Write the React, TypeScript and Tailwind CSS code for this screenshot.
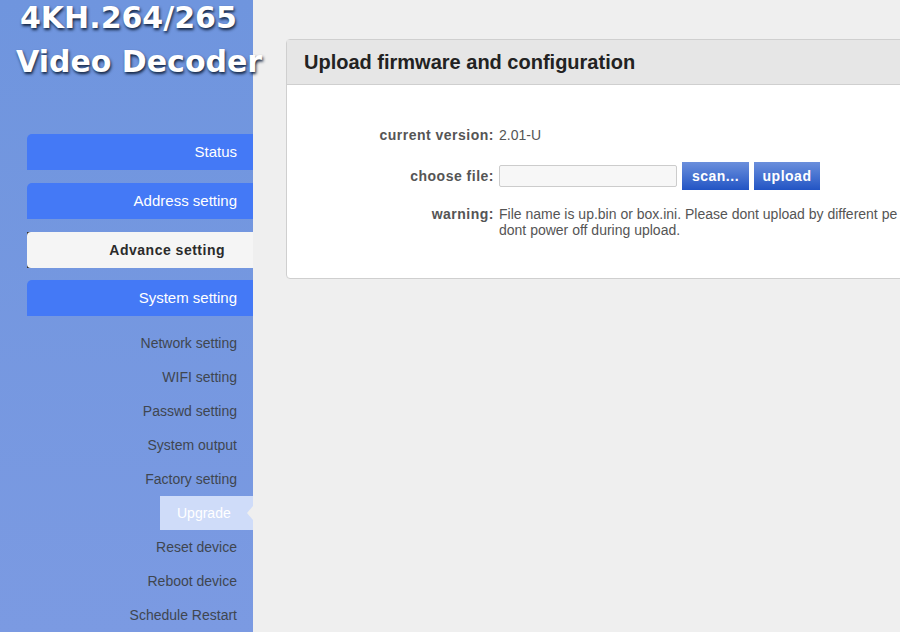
const subItems = [
  "Network setting",
  "WIFI setting",
  "Passwd setting",
  "System output",
  "Factory setting",
  "Upgrade",
  "Reset device",
  "Reboot device",
  "Schedule Restart",
];

function MainItem({ label }: { label: string }) {
  return (
    <a className="flex h-9 items-center justify-end rounded-tl-[5px] bg-[#4479f6] pr-4 text-[15px] text-white">
      {label}
    </a>
  );
}

function FormRow({ label, children }: { label: string; children: React.ReactNode }) {
  return (
    <div className="flex items-center gap-[5px]">
      <div className="w-[207px] shrink-0 text-right text-[14px] font-bold tracking-[0.5px] text-[#555]">
        {label}
      </div>
      {children}
    </div>
  );
}

function BlueButton({ label }: { label: string }) {
  return (
    <button className="h-7 bg-gradient-to-b from-[#6b8fdc] to-[#2254c4] text-[14px] font-bold tracking-[0.5px] text-white">
      {label}
    </button>
  );
}

export default function App() {
  return (
    <div className="flex h-[632px] w-[900px] overflow-hidden bg-[#efefef] font-['Liberation_Sans',Arial,sans-serif]">
      <aside className="flex w-[253px] shrink-0 flex-col bg-gradient-to-b from-[#6f95de] to-[#7b9ae2] pt-px">
        <div className="h-[139px] pl-4 font-['DejaVu_Sans',sans-serif] text-[30px] leading-[44px] font-bold whitespace-nowrap text-white [text-shadow:1px_2px_3px_#12233f]">
          <div className="-mt-[5px] pl-[4px]">4KH.264/265</div>
          <div>Video Decoder</div>
        </div>
        <nav className="pl-[27px]">
          <MainItem label="Status" />
          <div className="mt-[13px]">
            <MainItem label="Address setting" />
          </div>
          <div className="mt-[13px] bg-[#333]">
            <a className="flex h-9 items-center justify-end rounded-l-[4px] bg-[#f5f5f5] pr-7 text-[14px] font-bold tracking-[0.5px] text-[#2b2b2b]">
              Advance setting
            </a>
          </div>
          <div className="mt-3">
            <MainItem label="System setting" />
          </div>
        </nav>
        <ul className="mt-[10px] flex flex-col items-end">
          {subItems.map((item) =>
            item === "Upgrade" ? (
              <li
                key={item}
                className="relative flex h-[34px] w-[93px] items-center bg-[#cfdcf9] pl-[17px] text-[14px] text-white"
              >
                {item}
                <span className="absolute top-[10px] right-0 h-0 w-0 border-y-[7px] border-r-[6px] border-y-transparent border-r-[#efefef]" />
              </li>
            ) : (
              <li
                key={item}
                className="flex h-[34px] items-center pr-4 text-[14px] text-[#3f4650]"
              >
                {item}
              </li>
            ),
          )}
        </ul>
      </aside>
      <main className="min-w-0 flex-1 overflow-hidden pt-[39px] pl-[33px]">
        <section className="h-[240px] w-[760px] rounded-t-[4px] rounded-b-[4px] border border-[#cfcfcf] bg-white">
          <h1 className="flex h-[45px] items-center border-b border-[#cfcfcf] bg-[#e6e6e6] pl-[17px] text-[20px] font-bold text-[#222]">
            Upload firmware and configuration
          </h1>
          <div className="flex flex-col pt-10 text-[14px] text-[#555]">
            <FormRow label="current version:">
              <span>2.01-U</span>
            </FormRow>
            <div className="mt-[16px]">
              <FormRow label="choose file:">
                <div className="h-[22px] w-[178px] rounded-[2px] border border-[#ccc] bg-[#f7f7f7]" />
                <div className="flex gap-[5px]">
                  <div className="flex w-[67px] flex-col">
                    <BlueButton label="scan..." />
                  </div>
                  <div className="flex w-[66px] flex-col">
                    <BlueButton label="upload" />
                  </div>
                </div>
              </FormRow>
            </div>
            <div className="mt-4 flex items-start gap-[5px] leading-4">
              <div className="w-[207px] shrink-0 text-right font-bold tracking-[0.5px] text-[#555]">
                warning:
              </div>
              <p className="whitespace-nowrap">
                File name is up.bin or box.ini. Please dont upload by different pe
                <br />
                dont power off during upload.
              </p>
            </div>
          </div>
        </section>
      </main>
    </div>
  );
}
